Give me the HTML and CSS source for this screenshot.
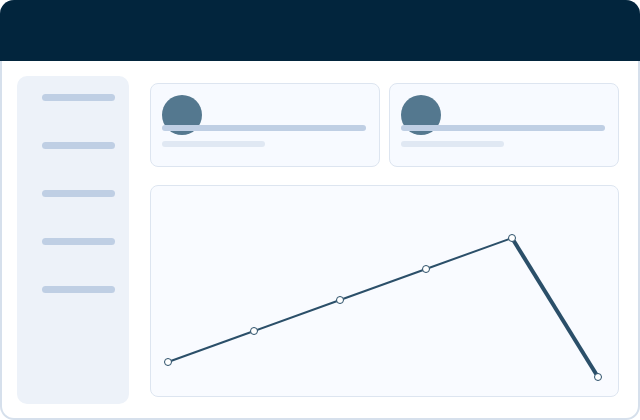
FILE: index.html
```html
<!DOCTYPE html>
<html lang="en">

<head>
    <meta charset="UTF-8">
    <meta name="viewport" content="width=device-width, initial-scale=1.0">
    <title>Dashboard</title>
    <link rel="stylesheet" href="styles.css">
</head>

<body>
    <div class="window">
        <div class="titlebar"></div>
        <div class="content">
            <ul class="sidebar">
                <li></li>
                <li></li>
                <li></li>
                <li></li>
                <li></li>
            </ul>
            <div class="main">
                <div class="cards">
                    <div class="card">
                        <div class="avatar"></div>
                        <div class="line"></div>
                        <div class="line short"></div>
                    </div>
                    <div class="card">
                        <div class="avatar"></div>
                        <div class="line"></div>
                        <div class="line short"></div>
                    </div>
                </div>
                <div class="chart">
                    <svg width="467" height="210" viewBox="0 0 467 210">
                        <polyline points="17,176 103,145 189,114 275,83 361,52" fill="none" stroke="#2b4f69" stroke-width="2" />
                        <line x1="361" y1="52" x2="447" y2="191" stroke="#2b4f69" stroke-width="4" />
                        <g fill="#fff" stroke="#2b4f69" stroke-width="1">
                            <circle cx="17" cy="176" r="3.5" />
                            <circle cx="103" cy="145" r="3.5" />
                            <circle cx="189" cy="114" r="3.5" />
                            <circle cx="275" cy="83" r="3.5" />
                            <circle cx="361" cy="52" r="3.5" />
                            <circle cx="447" cy="191" r="3.5" />
                        </g>
                    </svg>
                </div>
            </div>
        </div>
    </div>
</body>

</html>
```

FILE: styles.css
```css
body {
    margin: 0;
    font-family: "Liberation Sans", Arial, sans-serif;
}

.window {
    display: flex;
    flex-direction: column;
    width: 640px;
    height: 420px;
    border-radius: 14px;
    overflow: hidden;
    background-color: #d6e0ec;
}

.titlebar {
    height: 61px;
    background-color: #02253d;
}

.content {
    flex: 1;
    display: flex;
    margin: 0 2px 2px;
    padding: 15px 19px 14px 15px;
    background-color: #fff;
    border-radius: 0 0 12px 12px;
}

.sidebar {
    width: 112px;
    margin: 0;
    padding: 18px 14px 0 25px;
    box-sizing: border-box;
    list-style: none;
    background-color: #edf2f9;
    border-radius: 10px;
}

.sidebar li {
    height: 7px;
    margin-bottom: 41px;
    border-radius: 4px;
    background-color: #bfcfe4;
}

.main {
    flex: 1;
    display: flex;
    flex-direction: column;
    gap: 18px;
    margin-left: 21px;
    padding: 7px 0;
}

.cards {
    display: flex;
    gap: 9px;
}

.card {
    flex: 1;
    height: 84px;
    box-sizing: border-box;
    padding: 11px 13px 0 11px;
    border: 1px solid #dde5f0;
    border-radius: 8px;
    background-color: #f7faff;
}

.avatar {
    width: 40px;
    height: 40px;
    border-radius: 50%;
    background-color: #54788f;
}

.line {
    height: 6px;
    margin-top: -10px;
    border-radius: 3px;
    background-color: #bfcfe4;
}

.line.short {
    width: 103px;
    margin-top: 10px;
    background-color: #e0e8f3;
}

.chart {
    flex: 1;
    border: 1px solid #dde5f0;
    border-radius: 8px;
    background-color: #f9fbff;
}

.chart svg {
    display: block;
}
```
